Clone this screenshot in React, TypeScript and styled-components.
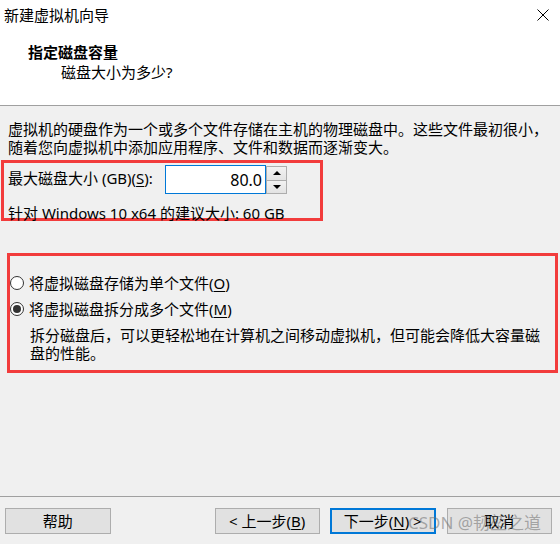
import React from "react";
import styled, { createGlobalStyle } from "styled-components";

const Global = createGlobalStyle`
  html, body { margin: 0; padding: 0; background: #f0f0f0; }
  body { font-family: "Noto Sans", "Noto Sans CJK SC", sans-serif; font-size: 15px; color: #000; }
  * { box-sizing: border-box; }
`;

const Window = styled.div`
  width: 560px;
  height: 544px;
  display: flex;
  flex-direction: column;
  background: #f0f0f0;
  position: relative;
  overflow: hidden;
`;

const Header = styled.header`
  height: 106px;
  background: #ffffff;
  border-bottom: 1px solid #a0a0a0;
  display: flex;
  flex-direction: column;
`;

const TitleBar = styled.div`
  display: flex;
  align-items: center;
  justify-content: space-between;
  padding: 5px 11px 0 4px;
  height: 25px;
`;

const TitleText = styled.span`
  line-height: 20px;
`;

const Close = styled.svg`
  width: 12px;
  height: 12px;
  margin-top: -1px;
`;

const Heading = styled.div`
  margin: 18px 0 0 28px;
  font-weight: 700;
  line-height: 18px;
`;

const SubHeading = styled.div`
  margin: 2px 0 0 61px;
  line-height: 18px;
`;

const Body = styled.main`
  flex: 1;
  display: flex;
  flex-direction: column;
`;

const Paragraph = styled.p`
  margin: 14px 8px 0 8px;
  line-height: 18px;
`;

const Marked = styled.section<{ $left: number; $width: number; $height: number; $top: number }>`
  margin: ${(p) => p.$top}px 0 0 ${(p) => p.$left}px;
  width: ${(p) => p.$width}px;
  height: ${(p) => p.$height}px;
  border: 3px solid #f23c3c;
  display: flex;
  flex-direction: column;
`;

const SizeRow = styled.div`
  display: flex;
  align-items: center;
  height: 29px;
  margin: 2px 0 0 4px;
`;

const Label = styled.label`
  width: 157px;
  line-height: 18px;
  margin-top: -3px;
`;

const Key = styled.span`
  text-decoration: underline;
  text-underline-offset: 2px;
`;

const NumberBox = styled.div`
  width: 101px;
  height: 29px;
  background: #fff;
  border: 1px solid #0078d7;
  display: flex;
  align-items: center;
  justify-content: flex-end;
  padding-right: 3px;
  font-size: 16px;
`;

const Spinner = styled.div`
  display: flex;
  flex-direction: column;
  width: 21px;
  height: 28px;
  margin-top: 1px;
`;

const SpinButton = styled.div`
  flex: 1;
  border: 1px solid #adadad;
  background: linear-gradient(#f2f2f2, #e3e3e3);
  display: flex;
  align-items: center;
  justify-content: center;
  & + & { border-top: none; }
`;

const Triangle = styled.span<{ $up?: boolean }>`
  width: 0;
  height: 0;
  border-left: 4px solid transparent;
  border-right: 4px solid transparent;
  ${(p) => (p.$up ? "border-bottom: 4px solid #000;" : "border-top: 4px solid #000;")}
`;

const Recommend = styled.div`
  margin: 11px 0 0 4px;
  line-height: 16px;
`;

const RadioRow = styled.div<{ $first?: boolean }>`
  display: flex;
  align-items: center;
  height: 26px;
  margin-top: ${(p) => (p.$first ? 14 : 0)}px;
`;

const RadioCircle = styled.span<{ $checked?: boolean }>`
  width: 14px;
  height: 14px;
  border-radius: 50%;
  border: 1px solid #333;
  background: #fff;
  margin: 0 5px 0 0;
  display: flex;
  align-items: center;
  justify-content: center;
  &::after {
    content: "";
    width: 8px;
    height: 8px;
    border-radius: 50%;
    background: ${(p) => (p.$checked ? "#333" : "transparent")};
  }
`;

const RadioText = styled.span`
  line-height: 18px;
`;

const Description = styled.div`
  margin: 4px 10px 0 20px;
  line-height: 18px;
`;

const Footer = styled.footer`
  height: 48px;
  border-top: 1px solid #a0a0a0;
  display: flex;
  align-items: flex-start;
  padding: 11px 8px 0 5px;
  position: relative;
`;

const Button = styled.button<{ $focused?: boolean; $ml?: number }>`
  width: 106px;
  height: 26px;
  margin-left: ${(p) => p.$ml ?? 0}px;
  background: #e1e1e1;
  border: ${(p) => (p.$focused ? "2px solid #0078d7" : "1px solid #adadad")};
  font-family: "Noto Sans", "Noto Sans CJK SC", sans-serif;
  font-size: 15px;
  color: #000;
  padding: 0;
  line-height: 18px;
`;

const Watermark = styled.span`
  position: absolute;
  left: 408px;
  top: 12px;
  font-size: 17px;
  color: rgba(110, 110, 110, 0.55);
  font-family: "Noto Sans", "Noto Sans CJK SC", sans-serif;
  pointer-events: none;
  white-space: nowrap;
`;

export default function App() {
  return (
    <>
      <Global />
      <Window>
        <Header>
          <TitleBar>
            <TitleText>新建虚拟机向导</TitleText>
            <Close viewBox="0 0 12 12">
              <path d="M0.5 0.5 L11.5 11.5 M11.5 0.5 L0.5 11.5" stroke="#000" strokeWidth="1" fill="none" />
            </Close>
          </TitleBar>
          <Heading>指定磁盘容量</Heading>
          <SubHeading>磁盘大小为多少?</SubHeading>
        </Header>
        <Body>
          <Paragraph>
            虚拟机的硬盘作为一个或多个文件存储在主机的物理磁盘中。这些文件最初很小，
            <br />
            随着您向虚拟机中添加应用程序、文件和数据而逐渐变大。
          </Paragraph>
          <Marked $left={1} $width={322} $height={61} $top={4}>
            <SizeRow>
              <Label>
                最大磁盘大小 (GB)(<Key>S</Key>):
              </Label>
              <NumberBox>80.0</NumberBox>
              <Spinner>
                <SpinButton>
                  <Triangle $up />
                </SpinButton>
                <SpinButton>
                  <Triangle />
                </SpinButton>
              </Spinner>
            </SizeRow>
            <Recommend>针对 Windows 10 x64 的建议大小: 60 GB</Recommend>
          </Marked>
          <Marked $left={7} $width={551} $height={120} $top={32}>
            <RadioRow $first>
              <RadioCircle />
              <RadioText>
                将虚拟磁盘存储为单个文件(<Key>O</Key>)
              </RadioText>
            </RadioRow>
            <RadioRow>
              <RadioCircle $checked />
              <RadioText>
                将虚拟磁盘拆分成多个文件(<Key>M</Key>)
              </RadioText>
            </RadioRow>
            <Description>
              拆分磁盘后，可以更轻松地在计算机之间移动虚拟机，但可能会降低大容量磁
              <br />
              盘的性能。
            </Description>
          </Marked>
        </Body>
        <Footer>
          <Button>帮助</Button>
          <Button $ml={104}>
            &lt; 上一步(<Key>B</Key>)
          </Button>
          <Button $ml={10} $focused>
            下一步(<Key>N</Key>) &gt;
          </Button>
          <Button $ml={11}>取消</Button>
          <Watermark>CSDN @韧堃之道</Watermark>
        </Footer>
      </Window>
    </>
  );
}
